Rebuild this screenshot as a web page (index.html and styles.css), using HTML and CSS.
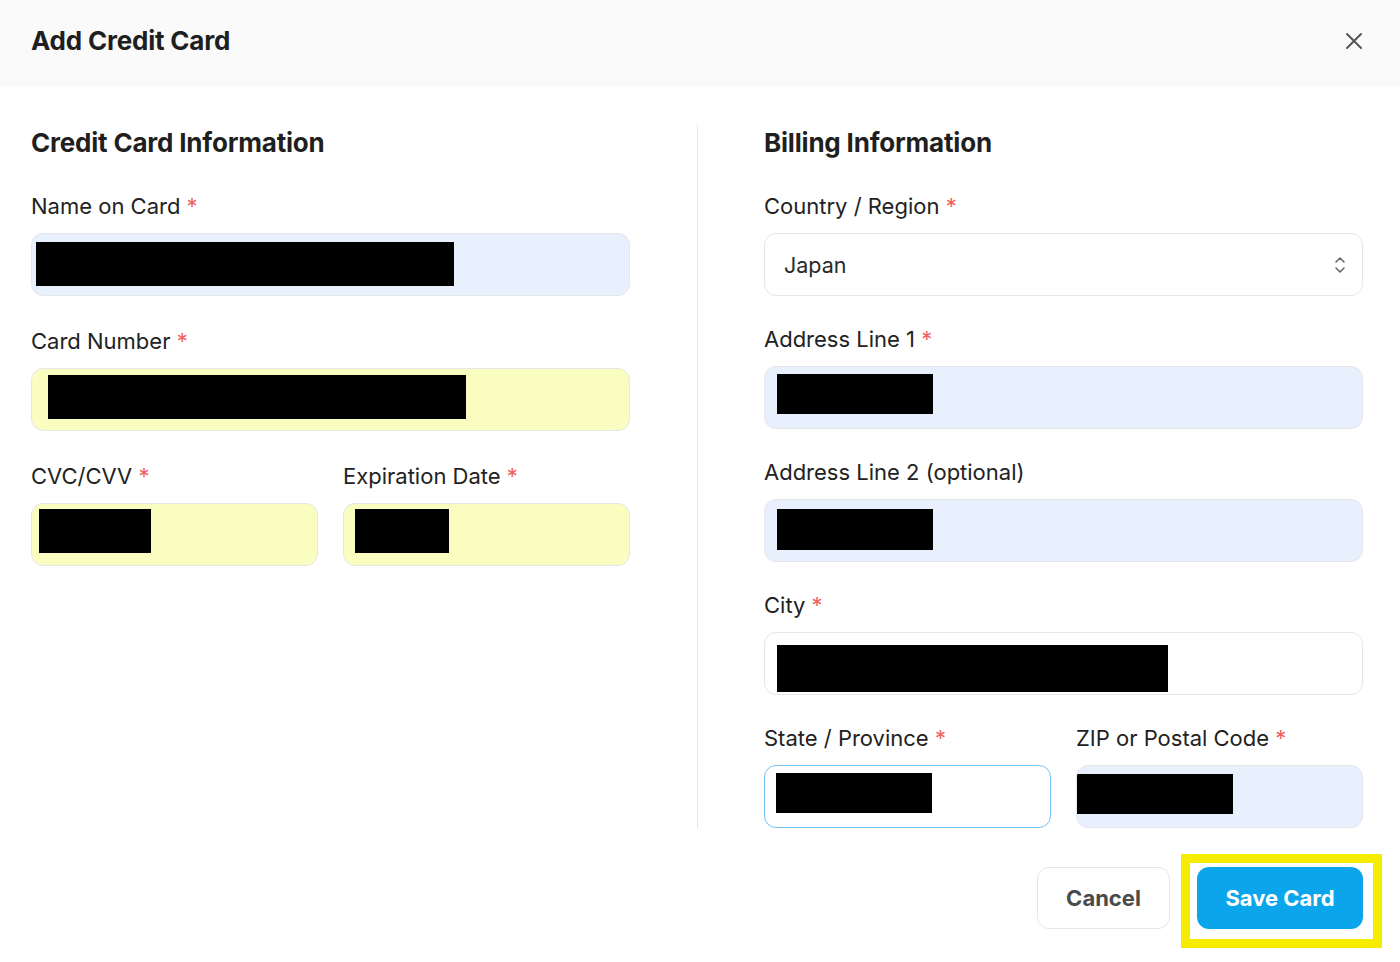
FILE: index.html
```html
<!DOCTYPE html>
<html lang="en">
<head>
<meta charset="utf-8">
<title>Add Credit Card</title>
<link rel="stylesheet" href="styles.css">
</head>
<body>
<header class="modal-header">
  <h1 class="modal-title">Add Credit Card</h1>
  <button class="close-btn" aria-label="Close">
    <svg width="18" height="18" viewBox="0 0 18 18" fill="none" stroke="#555" stroke-width="2" stroke-linecap="round"><path d="M2 2L16 16M16 2L2 16"/></svg>
  </button>
</header>
<main class="modal-body">
  <section class="col col-left">
    <h2 class="section-title">Credit Card Information</h2>
    <div class="fields fields-left">
      <div class="field">
        <label class="label">Name on Card <span class="req">*</span></label>
        <div class="input autofill-blue"><span class="redact" style="margin:8px 0 0 4px;width:418px;height:44px"></span></div>
      </div>
      <div class="field">
        <label class="label">Card Number <span class="req">*</span></label>
        <div class="input autofill-yellow"><span class="redact" style="margin:6px 0 0 16px;width:418px;height:44px"></span></div>
      </div>
      <div class="row">
        <div class="field">
          <label class="label">CVC/CVV <span class="req">*</span></label>
          <div class="input autofill-yellow"><span class="redact" style="margin:5px 0 0 7px;width:112px;height:44px"></span></div>
        </div>
        <div class="field">
          <label class="label">Expiration Date <span class="req">*</span></label>
          <div class="input autofill-yellow"><span class="redact" style="margin:5px 0 0 11px;width:94px;height:44px"></span></div>
        </div>
      </div>
    </div>
  </section>
  <section class="col col-right">
    <h2 class="section-title">Billing Information</h2>
    <div class="fields fields-right">
      <div class="field">
        <label class="label">Country / Region <span class="req">*</span></label>
        <div class="input select">
          <span class="select-value">Japan</span>
          <svg class="select-arrows" width="12" height="20" viewBox="0 0 12 20" fill="none" stroke="#666" stroke-width="1.6" stroke-linecap="round" stroke-linejoin="round"><path d="M2 7L6 3L10 7"/><path d="M2 13L6 17L10 13"/></svg>
        </div>
      </div>
      <div class="field">
        <label class="label">Address Line 1 <span class="req">*</span></label>
        <div class="input autofill-blue"><span class="redact" style="margin:7px 0 0 12px;width:156px;height:40px"></span></div>
      </div>
      <div class="field">
        <label class="label">Address Line 2 (optional)</label>
        <div class="input autofill-blue"><span class="redact" style="margin:9px 0 0 12px;width:156px;height:41px"></span></div>
      </div>
      <div class="field">
        <label class="label">City <span class="req">*</span></label>
        <div class="input plain"><span class="redact" style="margin:12px 0 0 12px;width:391px;height:47px"></span></div>
      </div>
      <div class="row">
        <div class="field">
          <label class="label">State / Province <span class="req">*</span></label>
          <div class="input plain focused"><span class="redact" style="margin:7px 0 0 11px;width:156px;height:40px"></span></div>
        </div>
        <div class="field">
          <label class="label">ZIP or Postal Code <span class="req">*</span></label>
          <div class="input autofill-blue"><span class="redact" style="margin:8px 0 0 0;width:156px;height:40px"></span></div>
        </div>
      </div>
    </div>
  </section>
</main>
<footer class="modal-footer">
  <button class="btn btn-cancel">Cancel</button>
  <div class="highlight-wrap">
    <button class="btn btn-save">Save Card</button>
    <span class="highlight-box"></span>
  </div>
</footer>
</body>
</html>
```
FILE: styles.css
```css
* { box-sizing: border-box; }

html, body { min-height: 962px; }

body {
  margin: 0;
  font-family: Inter, "Noto Sans", "Liberation Sans", sans-serif;
  color: #222;
  background: #fff;
}

.modal-header {
  height: 87px;
  background: #fafafa;
  display: flex;
  align-items: center;
  justify-content: space-between;
  padding: 0 37px 0 31px;
}

.modal-title {
  margin: -6px 0 0;
  font-size: 26px;
  font-weight: 700;
  color: #1f1f1f;
  letter-spacing: -0.2px;
  line-height: 34px;
}

.close-btn {
  border: 0;
  background: transparent;
  padding: 0;
  width: 18px;
  height: 18px;
  display: flex;
  margin-top: -6px;
}

.modal-body {
  display: grid;
  grid-template-columns: 667px 665px;
  padding: 38px 37px 0 31px;
}

.col-left {
  padding-right: 67px;
  border-right: 1px solid #e6e6e6;
}

.col-right {
  padding-left: 66px;
}

.section-title {
  margin: 2px 0 0;
  font-size: 26px;
  line-height: 32px;
  font-weight: 700;
  color: #1f1f1f;
  letter-spacing: -0.2px;
}

.fields {
  display: flex;
  flex-direction: column;
  margin-top: 32px;
}

.fields-left { gap: 30px; }
.fields-right { gap: 28px; }

.field {
  display: flex;
  flex-direction: column;
  gap: 12px;
}

.row {
  display: grid;
  grid-template-columns: 1fr 1fr;
  gap: 25px;
}

.label {
  font-size: 22px;
  line-height: 30px;
  color: #222;
  font-weight: 400;
}

.req {
  color: #ef5f5f;
}

.input {
  height: 63px;
  border: 1px solid #e4e6e9;
  border-radius: 12px;
  display: flex;
  align-items: flex-start;
  background: #fff;
  overflow: hidden;
}

.autofill-blue { background: #e8f0fe; }
.autofill-yellow { background: #fafdc0; }
.plain { background: #fff; }

.focused {
  border: 1.5px solid #76c3f5;
}

.redact {
  display: block;
  background: #000;
  flex: none;
}

.select {
  align-items: center;
  justify-content: space-between;
  padding: 0 16px 0 19px;
}

.select-value {
  font-size: 21.5px;
  color: #2a2a2a;
}

.modal-footer {
  display: flex;
  justify-content: flex-end;
  gap: 27px;
  padding: 39px 37px 33px 0;
}

.btn {
  height: 62px;
  border-radius: 12px;
  font-family: Inter, "Noto Sans", "Liberation Sans", sans-serif;
  font-size: 22px;
  font-weight: 700;
  cursor: pointer;
  padding: 0;
}

.btn-cancel {
  width: 133px;
  background: #fff;
  border: 1px solid #e6e6e6;
  color: #4a4a4a;
}

.btn-save {
  width: 166px;
  background: #0ba5ec;
  border: 0;
  color: #fff;
}

.highlight-wrap {
  position: relative;
  display: flex;
}

.highlight-box {
  position: absolute;
  left: -16px;
  top: -13px;
  right: -19px;
  bottom: -19px;
  border: 9px solid #f5ec00;
  pointer-events: none;
}
```
